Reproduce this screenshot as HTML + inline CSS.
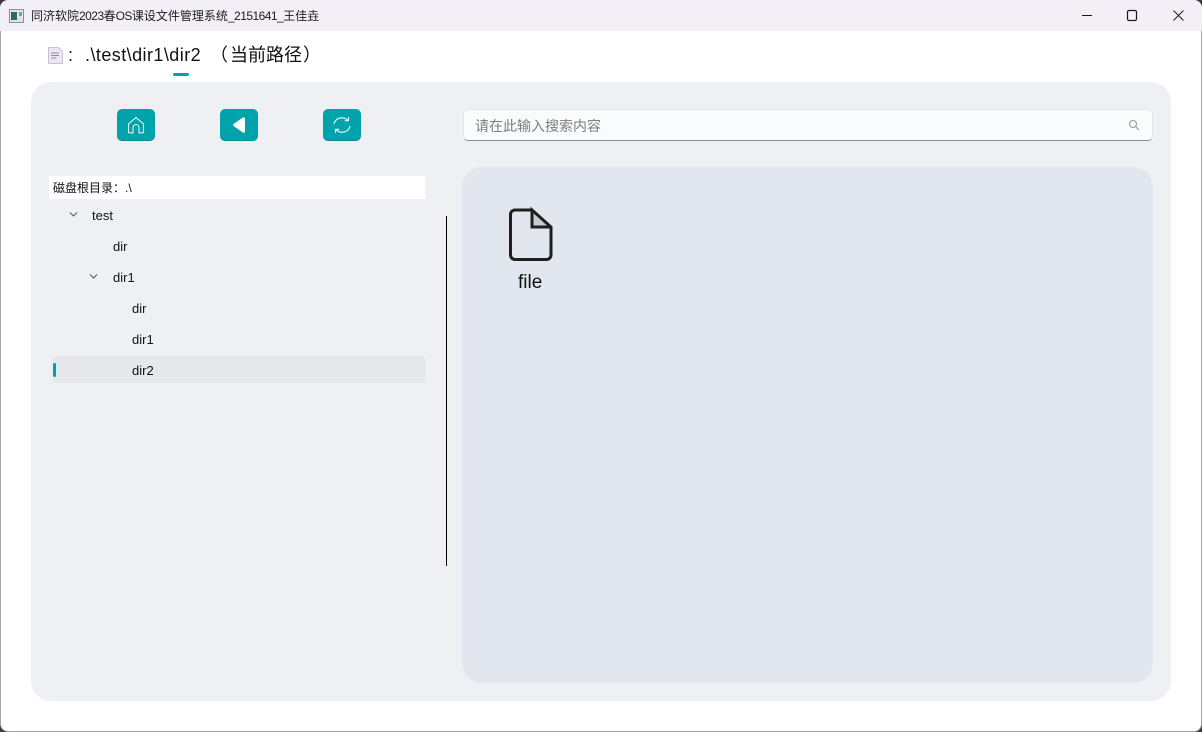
<!DOCTYPE html>
<html lang="zh">
<head>
<meta charset="utf-8">
<style>
*{box-sizing:border-box;margin:0;padding:0}
html,body{width:1202px;height:732px;overflow:hidden;background:#3a3a3e}
body{position:relative;font-family:"Liberation Sans","Noto Sans CJK SC",sans-serif;color:#000}
.a{position:absolute;white-space:nowrap}
#win{left:0;top:0;width:1202px;height:732px;background:#fff;border-radius:8px;overflow:hidden;border:1px solid #a5a3a8}
#tb{left:0;top:0;width:1202px;height:31px;background:#f2f0f6}
.l{letter-spacing:-.53px}
.btn{width:38px;height:32px;top:109px;background:#00a3ab;border-radius:5px;border-bottom:1px solid #008a91}
.n{font-size:13px;line-height:20px;color:#111}
.p{top:43px;font-size:18px;line-height:24px;color:#111}
</style>
</head>
<body>
<div class="a" id="win"></div>
<div class="a" id="tb" style="border-radius:8px 8px 0 0"></div>
<svg class="a" style="left:9px;top:9px" width="15" height="14"><rect x=".5" y=".5" width="14" height="13" fill="#dfe5e6" stroke="#8a9296"/><rect x="2" y="3" width="6" height="8" fill="#2d6b68"/><rect x="10" y="3" width="3" height="4" fill="#7f9ca8"/></svg>
<div class="a" style="left:31px;top:6px;font-size:12px;line-height:20px;color:#1a1a1a">同济软院<span class="l">2023</span>春<span class="l">OS</span>课设文件管理系统<span class="l">_2151641_</span>王佳垚</div>
<svg class="a" style="left:1060px;top:0" width="142" height="31" fill="none" stroke="#1a1a1a" stroke-width="1"><path d="M22 15.500h10"/><rect x="67.500" y="10.500" width="9" height="10" rx="1.500" stroke-width="1.200"/><path d="M113.500 10.500l10 10M123.500 10.500l-10 10"/></svg>

<svg class="a" style="left:47px;top:46px" width="17" height="19"><path d="M1.500 1.500h10l4 4v12h-14z" fill="#ece6f2" stroke="#c9c0d2"/><path d="M4 7h8M4 9.500h8M4 12h5" stroke="#8f8a96"/></svg>
<div class="a p" style="left:68px">:</div>
<div class="a p" style="left:85px;letter-spacing:.44px">.\test\dir1\dir2</div>
<div class="a p" style="left:210px">（</div>
<div class="a p" style="left:230px">当前路径</div>
<div class="a p" style="left:303px">）</div>
<div class="a" style="left:173px;top:73px;width:16px;height:3px;border-radius:2px;background:#00a3ab"></div>

<div class="a" style="left:31px;top:82px;width:1140px;height:619px;background:#eff0f4;border-radius:20px"></div>

<div class="a btn" style="left:117px"></div>
<svg class="a" style="left:127px;top:116px" width="18" height="18" fill="none" stroke="#dff5f5" stroke-width="1.100"><path d="M1.500 8L9 1.500 16.500 8v8a.8.8 0 0 1-.8.8H12V11.500a3 3 0 0 0-6 0V16.800H2.300a.8.8 0 0 1-.8-.8z"/></svg>
<div class="a btn" style="left:220px"></div>
<svg class="a" style="left:232px;top:116px" width="14" height="18"><path d="M13 2.500V15.500a1.300 1.300 0 0 1-2.100 1L1.800 10.200a1.500 1.500 0 0 1 0-2.400L10.900 1.500a1.300 1.300 0 0 1 2.100 1z" fill="#fff"/></svg>
<div class="a btn" style="left:323px"></div>
<svg class="a" style="left:333px;top:116px" width="18" height="18" fill="none" stroke="#eefafa" stroke-width="1.100"><path d="M1 8a8 7.500 0 0 1 14-3.500M17 10a8 7.500 0 0 1-14 3.500"/><path d="M15.500 1v3.700h-3.700M2.500 17v-3.700h3.700"/></svg>

<div class="a" style="left:463px;top:109px;width:690px;height:32px;background:#fafbfd;border:1px solid #e2e4e8;border-bottom:1px solid #8f8f93;border-radius:5px"></div>
<div class="a" style="left:475px;top:116px;font-size:14px;line-height:20px;color:#7d7d80">请在此输入搜索内容</div>
<svg class="a" style="left:1128px;top:119px" width="12" height="12" fill="none" stroke="#9a9a9e" stroke-width="1.100"><circle cx="5" cy="5" r="3.500"/><path d="M7.800 7.800L11 11"/></svg>

<div class="a" style="left:49px;top:176px;width:376px;height:23px;background:#fff"></div>
<div class="a" style="left:53px;top:178px;font-size:12px;line-height:20px;color:#111">磁盘根目录：.\</div>

<svg class="a" style="left:69px;top:211px" width="9" height="7" fill="none" stroke="#555" stroke-width="1"><path d="M1 1.500l3.500 3.500L8 1.500"/></svg>
<div class="a n" style="left:92px;top:206px">test</div>
<div class="a n" style="left:113px;top:237px">dir</div>
<svg class="a" style="left:89px;top:273px" width="9" height="7" fill="none" stroke="#555" stroke-width="1"><path d="M1 1.500l3.500 3.500L8 1.500"/></svg>
<div class="a n" style="left:113px;top:268px">dir1</div>
<div class="a n" style="left:132px;top:299px">dir</div>
<div class="a n" style="left:132px;top:330px">dir1</div>
<div class="a" style="left:53px;top:356px;width:373px;height:27px;background:#e7e8ec;border-radius:4px"></div>
<div class="a" style="left:53px;top:363px;width:3px;height:14px;background:#00a3ab;border-radius:1.500px"></div>
<div class="a n" style="left:132px;top:361px">dir2</div>

<div class="a" style="left:446px;top:216px;width:1px;height:350px;background:#000"></div>

<div class="a" style="left:462px;top:167px;width:691px;height:516px;background:#e2e7ef;border-radius:20px"></div>
<svg class="a" style="left:505px;top:205px" width="50" height="60" fill="none" stroke="#1f1f1f" stroke-width="3"><path d="M27 5L46 22H27z" fill="#c9cbd0" stroke="none"/><path d="M27 5H10a4.500 4.500 0 0 0-4.500 4.500V50a4.500 4.500 0 0 0 4.500 4.500H41.500a4.500 4.500 0 0 0 4.500-4.500V22L27 5V22H46"/></svg>
<div class="a" style="left:518px;top:271px;font-size:19px;line-height:24px;color:#111">file</div>
</body>
</html>
